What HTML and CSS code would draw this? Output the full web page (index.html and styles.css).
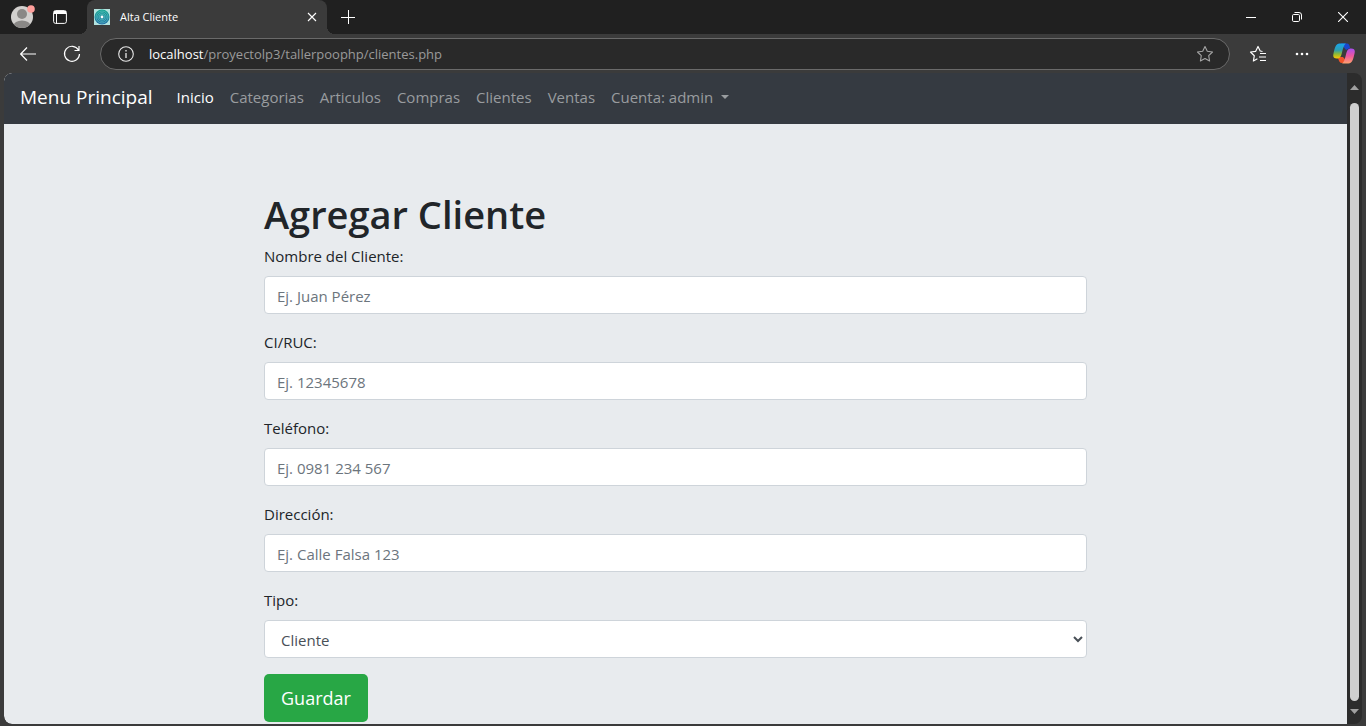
FILE: index.html
```html
<!DOCTYPE html>
<html lang="es">
<head>
<meta charset="utf-8">
<title>Alta Cliente</title>
<link rel="stylesheet" href="styles.css">
</head>
<body>
<div class="browser">
  <div class="tabstrip">
    <button class="chrome-btn profile" aria-label="Perfil">
      <svg width="26" height="26" viewBox="0 0 26 26"><defs><clipPath id="avatar"><circle cx="12" cy="14" r="11"/></clipPath></defs><circle cx="12" cy="14" r="11" fill="#d2d0ce"/><g clip-path="url(#avatar)" fill="#8a8886"><circle cx="12" cy="11" r="5"/><ellipse cx="12" cy="23" rx="8.500" ry="5.500"/></g><circle cx="21" cy="6" r="3.800" fill="#ff9f9b"/></svg>
    </button>
    <button class="chrome-btn workspaces" aria-label="Pestañas">
      <svg width="14" height="14" viewBox="0 0 14 14" fill="none" stroke="#fff"><rect x=".6" y=".6" width="12.800" height="12.800" rx="2"/><path d="M1 2.500h12" stroke-width="3"/><path d="M3.500 3v10.500" stroke-width="1"/></svg>
    </button>
    <div class="tab">
      <svg width="16" height="16" viewBox="0 0 16 16"><defs><linearGradient id="fav" x2="0" y2="1"><stop stop-color="#16a88f"/><stop offset="1" stop-color="#236da8"/></linearGradient></defs><path fill="#b3e3df" d="M0 0h16v16H0z"/><circle cx="8" cy="8" r="7.500" fill="url(#fav)"/><g fill="none" stroke="#5bbcc0" stroke-width=".7"><circle cx="8" cy="8" r="6"/><circle cx="8" cy="8" r="4.300"/><circle cx="8" cy="8" r="2.800"/></g><circle cx="8" cy="8" r="1.400" fill="#fff"/></svg>
      <span class="tab-title">Alta Cliente</span>
      <button class="chrome-btn tab-close" aria-label="Cerrar pestaña"><svg width="10" height="10" viewBox="0 0 10 10" stroke="#fff" stroke-width="1.100"><path d="m1 1 8 8M9 1 1 9"/></svg></button>
    </div>
    <button class="chrome-btn new-tab" aria-label="Nueva pestaña"><svg width="14" height="14" viewBox="0 0 14 14" stroke="#fff"><path d="M7.500 0v14M0 7.500h14"/></svg></button>
    <div class="window-controls">
      <button class="chrome-btn" aria-label="Minimizar"><svg width="10" height="10" viewBox="0 0 10 10" stroke="#fff"><path d="M0 5.500h10"/></svg></button>
      <button class="chrome-btn" aria-label="Restaurar"><svg width="10" height="10" viewBox="0 0 10 10" fill="none" stroke="#fff"><rect x=".5" y="2.500" width="7" height="7" rx="1.200"/><path d="M2.500.5H7A2.500 2.500 0 0 1 9.500 3v4.500"/></svg></button>
      <button class="chrome-btn" aria-label="Cerrar"><svg width="10" height="10" viewBox="0 0 10 10" stroke="#fff" stroke-width="1.100"><path d="m0 0 10 10M10 0 0 10"/></svg></button>
    </div>
  </div>

  <div class="toolbar">
    <button class="chrome-btn tool" aria-label="Atrás"><svg width="16" height="14" viewBox="0 0 16 14" fill="none" stroke="#fff" stroke-width="1.200"><path d="M7 .5.700 7 7 13.500M1 7h15"/></svg></button>
    <button class="chrome-btn tool" aria-label="Actualizar"><svg width="18" height="18" viewBox="0 0 18 18" fill="none" stroke="#fff" stroke-width="1.200"><path d="M15.500 5A7.500 7.500 0 1 0 16.500 9M16 1v4.500h-4.500"/></svg></button>
    <div class="address">
      <svg width="16" height="16" viewBox="0 0 16 16" fill="none" stroke="#e8e8e8" stroke-width="1.100"><circle cx="8" cy="8" r="7.300"/><path d="M8 7v5M8 4v1.500" stroke-width="1.300"/></svg>
      <div class="url"><span class="host">localhost</span>/proyectolp3/tallerpoophp/clientes.php</div>
      <button class="chrome-btn" aria-label="Favorito"><svg width="18" height="18" viewBox="0 0 18 18" fill="none" stroke="#a5a5a5" stroke-width="1.100" stroke-linejoin="round"><path d="m9 1.500 2.300 4.800 5.200.7-3.800 3.700.9 5.300L9 13.500 4.400 16l.9-5.300L1.500 7l5.200-.7z"/></svg></button>
    </div>
    <button class="chrome-btn tool" aria-label="Favoritos"><svg width="18" height="18" viewBox="0 0 18 18" fill="none" stroke="#fff" stroke-width="1.200" stroke-linejoin="round"><path d="M13.500 6.500 11.200 6 9 1.500 6.700 6.300 1.500 7l3.800 3.700-.9 5.300 4-2.200M11 8.500h6M10 12h7M11 15.500h6"/></svg></button>
    <button class="chrome-btn tool" aria-label="Más"><svg width="14" height="4" viewBox="0 0 14 4" fill="#fff"><circle cx="2" cy="2" r="1.300"/><circle cx="7" cy="2" r="1.300"/><circle cx="12" cy="2" r="1.300"/></svg></button>
    <button class="chrome-btn copilot" aria-label="Copilot">
      <svg width="22" height="21" viewBox="0 0 22 21"><defs><linearGradient id="cpa" x2="0" y2="1"><stop stop-color="#18a5ee"/><stop offset=".45" stop-color="#2f9fae"/><stop offset=".7" stop-color="#8fba35"/><stop offset="1" stop-color="#ffc800"/></linearGradient><linearGradient id="cpb" x2="0" y2="1"><stop stop-color="#a84df0"/><stop offset=".5" stop-color="#ed579d"/><stop offset="1" stop-color="#ffa16c"/></linearGradient></defs><path fill="#1947cf" d="M8 .5h6c2 0 2.500 1.500 3 4.500l-4 2z"/><path fill="#f05429" d="M5 14h5l5 6H9c-2.500 0-3.300-2-4-6z"/><path fill="url(#cpa)" d="M6.500.5H13c-2 1-3 5-4 9-1 4-2 6-5 6-4 0-4.300-2-3.300-6C2 4 3 .5 6.500.5z"/><path fill="url(#cpb)" d="M15.500 20.500H9c2-1 3-5 4-9 1-4 2-6 5-6 4 0 4.300 2 3.300 6-1.300 5.500-2.300 9-5.800 9z"/></svg>
    </button>
  </div>

  <div class="viewport">
    <div class="page">
      <nav class="navbar">
        <a class="brand" href="#">Menu Principal</a>
        <a class="nav-link active" href="#">Inicio</a>
        <a class="nav-link" href="#">Categorias</a>
        <a class="nav-link" href="#">Articulos</a>
        <a class="nav-link" href="#">Compras</a>
        <a class="nav-link" href="#">Clientes</a>
        <a class="nav-link" href="#">Ventas</a>
        <a class="nav-link dropdown" href="#">Cuenta: admin</a>
      </nav>
      <form class="form">
        <h1>Agregar Cliente</h1>
        <div class="group"><label for="nombre">Nombre del Cliente:</label><input class="control" id="nombre" type="text" placeholder="Ej. Juan Pérez"></div>
        <div class="group"><label for="ruc">CI/RUC:</label><input class="control" id="ruc" type="text" placeholder="Ej. 12345678"></div>
        <div class="group"><label for="telefono">Teléfono:</label><input class="control" id="telefono" type="text" placeholder="Ej. 0981 234 567"></div>
        <div class="group"><label for="direccion">Dirección:</label><input class="control" id="direccion" type="text" placeholder="Ej. Calle Falsa 123"></div>
        <div class="group"><label for="tipo">Tipo:</label><select class="control" id="tipo"><option>Cliente</option></select></div>
        <button class="submit" type="button">Guardar</button>
      </form>
    </div>
    <div class="scrollbar" aria-hidden="true">
      <svg width="9" height="5" viewBox="0 0 9 5"><path fill="#a0a0a0" d="M4.500 0 9 5H0z"/></svg>
      <div class="thumb"></div>
      <svg width="9" height="5" viewBox="0 0 9 5"><path fill="#a0a0a0" d="M0 0h9L4.500 5z"/></svg>
    </div>
  </div>
</div>
</body>
</html>
```
FILE: styles.css
```css
* { box-sizing: border-box; }

body {
  margin: 0;
  font-family: "Open Sans", "Noto Sans", sans-serif;
  font-size: 15px;
  line-height: 24px;
  color: #212529;
  background: #3b3b3b;
}

.browser {
  display: flex;
  flex-direction: column;
  height: 100vh;
  overflow: hidden;
}

.chrome-btn {
  display: flex;
  align-items: center;
  justify-content: center;
  padding: 0;
  border: 0;
  background: none;
}

/* Tab strip */
.tabstrip {
  display: flex;
  align-items: center;
  flex: none;
  height: 34px;
  padding-left: 10px;
  background: #202020;
}
.profile { width: 26px; height: 34px; padding-bottom: 2px; }
.workspaces { width: 14px; margin: 0 20px 0 17px; }
.tab {
  position: relative;
  display: flex;
  align-items: center;
  width: 240px;
  height: 34px;
  padding: 0 10px 0 7px;
  border-radius: 8px 8px 0 0;
  background: #3b3b3b;
}
.tab::before,
.tab::after {
  content: "";
  position: absolute;
  bottom: 0;
  width: 8px;
  height: 8px;
}
.tab::before { right: 100%; background: radial-gradient(circle at 0 0, #202020 8px, #3b3b3b 8px); }
.tab::after { left: 100%; background: radial-gradient(circle at 100% 0, #202020 8px, #3b3b3b 8px); }
.tab-title { flex: 1; margin-left: 10px; font-size: 11px; color: #fff; }
.new-tab { margin-left: 14px; }
.window-controls { display: flex; margin-left: auto; }
.window-controls .chrome-btn { width: 46px; height: 34px; }

/* Toolbar */
.toolbar {
  display: flex;
  align-items: center;
  flex: none;
  height: 39px;
  padding: 0 10px 0 6px;
}
.tool { width: 44px; height: 32px; }
.address {
  display: flex;
  flex: 1;
  align-items: center;
  height: 32px;
  margin: 0 6px;
  padding: 0 15px 0 17px;
  border: 1px solid #6a6a6a;
  border-radius: 16px;
  background: #292929;
}
.url { flex: 1; margin-left: 15px; font-size: 13px; color: #9a9a9a; }
.host { color: #fff; }
.copilot { width: 24px; margin-left: 8px; }

/* Web page area */
.viewport {
  display: flex;
  flex: 1;
  min-height: 0;
  margin: 0 4px 2px;
  border-radius: 8px;
  overflow: hidden;
  background: #2c2c2c;
}
.page {
  flex: 1;
  overflow: hidden;
  border-radius: 8px 0 0 8px;
  background: #e8ebee;
}
.scrollbar {
  display: flex;
  flex-direction: column;
  align-items: center;
  flex: none;
  gap: 8px;
  width: 15px;
  padding: 12px 0 10px;
}
.scrollbar svg { flex: none; }
.thumb {
  flex: 1;
  width: 9px;
  margin-top: 5px;
  border-radius: 5px;
  background: #d0d0d0;
}

.navbar {
  display: flex;
  align-items: center;
  gap: 16px;
  height: 51px;
  padding: 0 16px 4px;
  border-radius: 8px 0 0 0;
  background: #353a41;
}
.brand { margin-right: 8px; font-size: 19px; color: #fff; text-decoration: none; }
.nav-link { font-size: 15px; color: #999c9f; text-decoration: none; }
.nav-link.active { color: #fff; }
.dropdown::after {
  content: "";
  display: inline-block;
  margin-left: 8px;
  vertical-align: 4px;
  border: 4px solid transparent;
  border-top-color: #999c9f;
  border-bottom: 0;
}

.form {
  max-width: 823px;
  margin: 0 auto;
  padding-top: 66px;
}
h1 { margin: 0 0 6px; font-size: 38px; font-weight: 600; line-height: 48px; }
.group { margin-bottom: 16px; }
label { display: block; margin-bottom: 8px; }
.control {
  display: block;
  width: 100%;
  height: 38px;
  padding: 7px 12px 5px;
  border: 1px solid #ced4da;
  border-radius: 4px;
  background: #fff;
  color: #495057;
  font: inherit;
}
.control::placeholder { color: #6c757d; opacity: 1; }
select.control { padding-right: 4px; }
.submit {
  height: 48px;
  padding: 0 17px;
  border: 0;
  border-radius: 5px;
  background: #28a745;
  color: #fff;
  font-family: inherit;
  font-size: 18px;
  line-height: 30px;
}
```
